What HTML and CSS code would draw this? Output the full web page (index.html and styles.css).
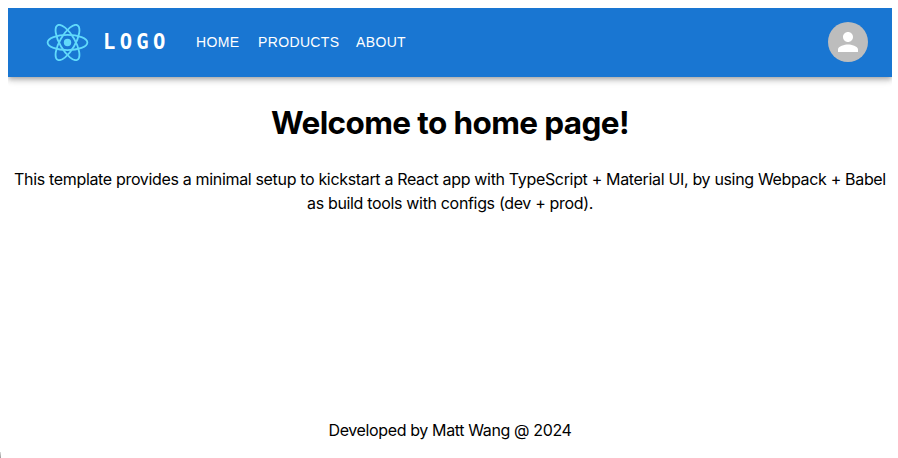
FILE: index.html
```html
<!DOCTYPE html>
<html lang="en">
<head>
<meta charset="utf-8">
<title>Home</title>
<link rel="stylesheet" href="styles.css">
</head>
<body>
<header class="bar">
  <svg class="logo" viewBox="-11.5 -10.23174 23 20.46348">
    <circle r="2.05" fill="#61dafb"/>
    <g stroke="#61dafb" fill="none">
      <ellipse rx="11" ry="4.2"/>
      <ellipse rx="11" ry="4.2" transform="rotate(60)"/>
      <ellipse rx="11" ry="4.2" transform="rotate(120)"/>
    </g>
  </svg>
  <span class="brand">LOGO</span>
  <nav class="nav"><a class="home">HOME</a><a class="products">PRODUCTS</a><a class="about">ABOUT</a></nav>
  <div class="avatar"><svg viewBox="0 0 24 24"><path fill="#fff" d="M12 12c2.21 0 4-1.79 4-4s-1.79-4-4-4-4 1.79-4 4 1.79 4 4 4zm0 2c-2.67 0-8 1.34-8 4v2h16v-2c0-2.66-5.330-4-8-4z"/></svg></div>
</header>
<main class="content">
  <h1 class="title">Welcome to home page!</h1>
  <p class="text">This template provides a minimal setup to kickstart a React app with TypeScript + Material UI, by using Webpack + Babel<br>as build tools with configs (dev + prod).</p>
</main>
<footer class="footer">Developed by Matt Wang @ 2024</footer>
</body>
</html>
```
FILE: styles.css
```css
* { box-sizing: border-box; }
body { margin: 8px 6px 0 8px; height: 450px; display: flex; flex-direction: column; background: #fff; color: #000; font: 16px/24px Inter, sans-serif; }
body::after { content: ""; position: absolute; left: 0; bottom: 0; width: 1px; height: 6px; background: linear-gradient(#ddd, #999); }
.bar { height: 69px; flex: none; display: flex; align-items: center; padding: 0 24px 1px 38px; background: #1976d2; color: #fff; box-shadow: 0 2px 4px -1px rgba(0,0,0,.2), 0 4px 5px rgba(0,0,0,.14), 0 1px 10px rgba(0,0,0,.12); }
.logo { width: 43px; height: 37px; }
.brand { width: 77px; margin-left: 14px; font: 700 20.5px/32px "DejaVu Sans Mono", monospace; letter-spacing: 4.3px; }
.nav { display: flex; margin-left: 16px; font: 14px/24px "Liberation Sans", sans-serif; letter-spacing: .36px; }
.home { width: 62px; }
.products { width: 98px; }
.avatar { width: 40px; height: 40px; margin-left: auto; border-radius: 50%; background: #bdbdbd; display: flex; align-items: center; justify-content: center; }
.avatar svg { width: 30px; height: 30px; }
.content { flex: 1; text-align: center; }
.title { margin: 26px 0 25px; font-size: 31.5px; line-height: 39px; font-weight: 700; letter-spacing: -.62px; }
.text { margin: 0; white-space: nowrap; letter-spacing: -.335px; }
.footer { margin-bottom: 16px; text-align: center; letter-spacing: -.37px; }
```
